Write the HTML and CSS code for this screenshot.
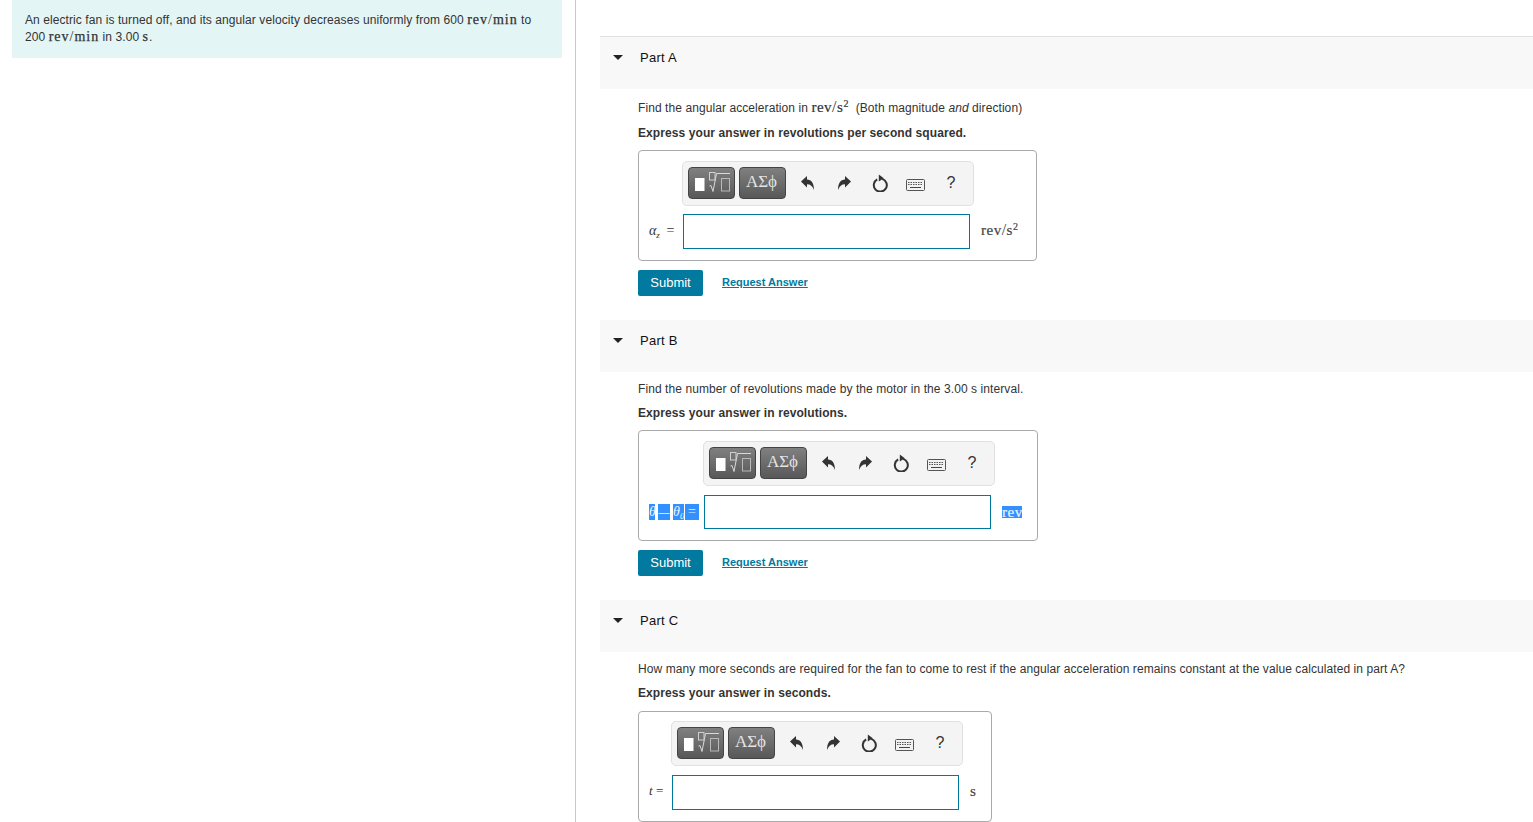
FILE: index.html
```html
<!DOCTYPE html>
<html lang="en">
<head>
<meta charset="utf-8">
<title>Electric fan</title>
<link rel="stylesheet" href="styles.css">
</head>
<body>
<svg class="defs" width="0" height="0" aria-hidden="true">
  <defs>
    <symbol id="i-math" viewBox="0 0 47 32">
      <rect x="7" y="11" width="9.5" height="13" fill="#fff"/>
      <rect x="21.5" y="5.5" width="5.5" height="7.5" fill="none" stroke="#d0d0d0"/>
      <path d="M21.5 19 L23 18.5 L25 24.5 L28.5 6.5 H42" fill="none" stroke="#d8d8d8" stroke-width="1"/>
      <rect x="33.5" y="11.5" width="8" height="12.5" fill="none" stroke="#b8b8b8"/>
    </symbol>
    <symbol id="i-undo" viewBox="0 0 13 14">
      <path d="M0 5.5 L6 0 V3.4 C10.5 3.4 13 7 13 14 C11.5 10.2 9.5 8.2 6 8.2 V11.5 Z" fill="#333"/>
    </symbol>
    <symbol id="i-reset" viewBox="0 0 16 18">
      <path d="M5.2 5.4 A6.5 6.5 0 1 0 10.2 4.9" fill="none" stroke="#333" stroke-width="2"/>
      <path d="M6.8 0.5 L11.8 4.2 L6.8 7.6 Z" fill="#333"/>
    </symbol>
    <symbol id="i-kbd" viewBox="0 0 19 12">
      <rect x="0.5" y="0.5" width="18" height="11" rx="1" fill="#f2f2f2" stroke="#555"/>
      <path d="M2 3.5 H17 M2 5.5 H17" stroke="#555" stroke-width="1" stroke-dasharray="1.5 1"/>
      <path d="M4 8.5 H15" stroke="#444" stroke-width="1"/>
    </symbol>
  </defs>
</svg>
<div class="page">
  <aside class="side">
    <div class="intro">An electric fan is turned off, and its angular velocity decreases uniformly from 600 <span class="m">rev<span class="sl">/</span>min</span> to 200 <span class="m">rev<span class="sl">/</span>min</span> in 3.00 <span class="m">s</span>.</div>
  </aside>
  <main class="main">

    <section class="part">
      <header class="head"><span class="caret"></span><h2>Part A</h2></header>
      <div class="body body-a">
        <p>Find the angular acceleration in <span class="m">rev<span class="sl">/</span>s<sup>2</sup></span>&nbsp; (Both magnitude <em>and</em> direction)</p>
        <p class="ex ex-a">Express your answer in revolutions per second squared.</p>
        <div class="box box-a">
          <div class="tools">
            <button class="tb" type="button"><svg width="47" height="32"><use href="#i-math"/></svg></button>
            <button class="tb greek" type="button">ΑΣϕ</button>
            <span class="ic nudge"><svg width="13" height="14"><use href="#i-undo"/></svg></span>
            <span class="ic"><svg class="flip" width="13" height="14"><use href="#i-undo"/></svg></span>
            <span class="ic"><svg width="16" height="18"><use href="#i-reset"/></svg></span>
            <span class="ic nudge kb"><svg width="19" height="12"><use href="#i-kbd"/></svg></span>
            <span class="ic q">?</span>
          </div>
          <div class="lab"><span class="mi">α<sub>z</sub></span>&nbsp;=</div>
          <div class="field"></div>
          <div class="unit">rev<span class="sl">/</span>s<sup>2</sup></div>
        </div>
        <div class="acts"><button class="sub" type="button">Submit</button><a class="req" href="#">Request Answer</a></div>
      </div>
    </section>

    <section class="part">
      <header class="head"><span class="caret"></span><h2>Part B</h2></header>
      <div class="body">
        <p>Find the number of revolutions made by the motor in the 3.00 s interval.</p>
        <p class="ex">Express your answer in revolutions.</p>
        <div class="box">
          <div class="tools">
            <button class="tb" type="button"><svg width="47" height="32"><use href="#i-math"/></svg></button>
            <button class="tb greek" type="button">ΑΣϕ</button>
            <span class="ic nudge"><svg width="13" height="14"><use href="#i-undo"/></svg></span>
            <span class="ic"><svg class="flip" width="13" height="14"><use href="#i-undo"/></svg></span>
            <span class="ic"><svg width="16" height="18"><use href="#i-reset"/></svg></span>
            <span class="ic nudge kb"><svg width="19" height="12"><use href="#i-kbd"/></svg></span>
            <span class="ic q">?</span>
          </div>
          <div class="lab lab-sel"><span class="sel s1 mi">θ</span><span class="sel s2">—</span><span class="sel s3 mi">θ<sub>0</sub></span><span class="sel s4">=</span></div>
          <div class="field short"></div>
          <div class="unit"><span class="sel-u">rev</span></div>
        </div>
        <div class="acts"><button class="sub" type="button">Submit</button><a class="req" href="#">Request Answer</a></div>
      </div>
    </section>

    <section class="part">
      <header class="head"><span class="caret"></span><h2>Part C</h2></header>
      <div class="body">
        <p>How many more seconds are required for the fan to come to rest if the angular acceleration remains constant at the value calculated in part A?</p>
        <p class="ex ex-c">Express your answer in seconds.</p>
        <div class="box box-c">
          <div class="tools">
            <button class="tb" type="button"><svg width="47" height="32"><use href="#i-math"/></svg></button>
            <button class="tb greek" type="button">ΑΣϕ</button>
            <span class="ic nudge"><svg width="13" height="14"><use href="#i-undo"/></svg></span>
            <span class="ic"><svg class="flip" width="13" height="14"><use href="#i-undo"/></svg></span>
            <span class="ic"><svg width="16" height="18"><use href="#i-reset"/></svg></span>
            <span class="ic nudge kb"><svg width="19" height="12"><use href="#i-kbd"/></svg></span>
            <span class="ic q">?</span>
          </div>
          <div class="lab"><span class="mi">t</span>&nbsp;=</div>
          <div class="field"></div>
          <div class="unit">s</div>
        </div>
      </div>
    </section>

  </main>
</div>
</body>
</html>
```

FILE: styles.css
```css
* { box-sizing: border-box; }
html, body { margin: 0; height: 100%; overflow: hidden; background: #fff; }
body { font-family: "Liberation Sans", Arial, sans-serif; font-size: 12px; color: #333; }
.defs { display: block; height: 0; }
.page { display: flex; height: 822px; }
.side { flex: 0 0 576px; padding-left: 12px; border-right: 1px solid #c0cadb; }
.intro { width: 550px; height: 58px; padding: 12px 13px 0; background: #e4f5f6; line-height: 17px; letter-spacing: 0.08px; }
.intro .m { font-size: 14px; letter-spacing: 0.95px; -webkit-text-stroke: 0.25px currentColor; }
.intro .sl { font-size: 14px; letter-spacing: 1.2px; }
.main { flex: 1; min-width: 0; padding: 36px 0 0 24px; }
.part:first-child { border-top: 1px solid #e2e2e2; }
.head { display: flex; align-items: flex-start; height: 52px; padding: 13px 0 0 13px; background: #f8f8f8; }
.caret { width: 0; height: 0; margin: 5px 17px 0 0; border-left: 5px solid transparent; border-right: 5px solid transparent; border-top: 5px solid #222; }
h2 { margin: 0; font-size: 13px; line-height: 16px; font-weight: 400; letter-spacing: 0.25px; color: #111; }
.body { padding: 8px 0 0 38px; }
.body-a { padding-top: 10px; }
p { margin: 0; height: 18px; line-height: 18px; letter-spacing: 0.08px; }
em { font-style: italic; }
.ex { margin-top: 6px; font-weight: 700; letter-spacing: 0.09px; }
.ex-a { margin-top: 7px; }
.m, .unit { font-family: "Liberation Serif", "Times New Roman", serif; font-size: 15px; line-height: 0; -webkit-text-stroke: 0.2px currentColor; letter-spacing: 0.5px; }
.sl { font-size: 16px; font-weight: 400; -webkit-text-stroke: 0; line-height: 0; }
sup { font-size: 10px; line-height: 0; vertical-align: 5px; }
sub { font-size: 9px; line-height: 0; vertical-align: -3px; }
.box { display: inline-grid; grid-template-columns: auto 287px auto; row-gap: 9px; align-items: center; align-content: start; min-height: 111px; margin-top: 8px; padding: 10px 15px 11px 10px; border: 1px solid #aaa; border-radius: 4px; background: #fff; vertical-align: top; }
.box-a { row-gap: 8px; }
.box-c { margin-top: 9px; padding-top: 9px; }
.tools { grid-column: 2; grid-row: 1; display: flex; align-items: center; width: 292px; height: 45px; margin-left: -1px; padding-left: 5px; gap: 4px; background: #f4f4f4; border: 1px solid #e0e0e0; border-radius: 5px; }
.tb { display: block; width: 47px; height: 32px; margin-top: -1px; padding: 0; border: 1px solid #444; border-radius: 4px; background: linear-gradient(#808080, #585858); color: #e4e4e4; }
.tb svg { display: block; margin: -1px; }
.greek { font-family: "Liberation Serif", "Times New Roman", serif; font-size: 17px; line-height: 26px; padding: 0 2px 3px 0; }
.ic { display: flex; justify-content: center; align-items: center; width: 36px; margin: -2px 0 0 -4px; color: #333; }
.ic:nth-child(3) { margin-left: 0; }
.nudge svg { margin-right: 2px; }
.kb { margin-top: 2px; }
.flip { transform: scaleX(-1); }
.q { font-size: 16px; padding-right: 2px; }
.lab { grid-column: 1; grid-row: 2; font-family: "Liberation Serif", "Times New Roman", serif; font-size: 13px; white-space: nowrap; }
.box-a .lab { width: 34px; margin-top: -2px; font-size: 14px; }
.box-a .mi { margin-right: 3px; }
.box-c .lab { width: 23px; margin-top: -4px; }
.mi { font-style: italic; }
.field { grid-column: 2; grid-row: 2; height: 35px; border: 1px solid #00799e; background: #fff; }
.short { height: 34px; }
.unit { grid-column: 3; grid-row: 2; padding-left: 11px; white-space: nowrap; color: #444; font-size: 15px; line-height: 18px; }
.box-a .unit { margin-top: -3px; padding-right: 3px; }
.box-c .unit { margin-top: -4px; }
.lab-sel { display: flex; width: 55px; height: 16px; }
.sel { display: block; height: 16px; line-height: 16px; background: #3390ff; color: #eaf3ff; text-align: center; font-size: 14px; }
.s1 { width: 6px; }
.s2 { width: 12px; margin-left: 3px; font-family: "Liberation Sans", sans-serif; font-size: 11px; }
.s3 { width: 11px; margin-left: 3px; }
.s4 { width: 14px; margin-left: 1px; }
.sel-u { display: inline-block; width: 20px; line-height: 12px; background: #3390ff; color: #eaf3ff; }
.acts { display: flex; align-items: center; gap: 19px; margin: 9px 0 24px; }
.sub { width: 65px; height: 26px; padding: 0; border: 0; border-radius: 2px; background: #027a9f; color: #fff; font: 13px/26px "Liberation Sans", Arial, sans-serif; }
.req { padding-bottom: 2px; font-size: 11px; font-weight: 700; color: #00799e; }
```
